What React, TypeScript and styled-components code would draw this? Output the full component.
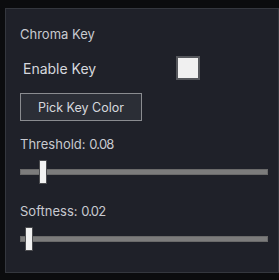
import React from "react";
import styled, { createGlobalStyle } from "styled-components";

const Global = createGlobalStyle`
  html, body { margin: 0; padding: 0; background: #0b0c0e; }
  body { font-family: Inter, "Noto Sans", sans-serif; }
`;

const Page = styled.div`
  width: 279px;
  height: 280px;
  padding: 8px 0 0 5px;
  box-sizing: border-box;
  background: #0b0c0e;
`;

const Panel = styled.div`
  width: 274px;
  height: 265px;
  box-sizing: border-box;
  background: #1f2129;
  border: 1px solid #34373e;
  padding: 17px 10px 0 14px;
  display: flex;
  flex-direction: column;
  align-items: flex-start;
`;

const Title = styled.div`
  font-size: 13px;
  line-height: 16px;
  color: #c8cad0;
`;

const Row = styled.div`
  display: flex;
  align-items: center;
  margin-top: 14px;
  height: 24px;
`;

const RowLabel = styled.span`
  font-size: 14px;
  line-height: 24px;
  padding-top: 2px;
  color: #d6d8dd;
  margin-left: 3px;
  width: 153px;
`;

const Check = styled.div<{ $on: boolean }>`
  width: 24px;
  height: 24px;
  box-sizing: border-box;
  border: 2px solid #55575c;
  background: ${(p) => (p.$on ? "#3b82f6" : "#f0f0f0")};
`;

const Button = styled.button`
  margin-top: 13px;
  width: 122px;
  height: 28px;
  box-sizing: border-box;
  background: #2b2e36;
  border: 1px solid #8a8c90;
  color: #d6d8dd;
  font-family: Inter, "Noto Sans", sans-serif;
  font-size: 12.5px;
  padding: 0;
`;

const Label = styled.div<{ $gap: number }>`
  margin-top: ${(p) => p.$gap}px;
  font-size: 13px;
  line-height: 16px;
  color: #c8cad0;
`;

const Value = styled.span`
  letter-spacing: -0.8px;
`;

const SliderBox = styled.div`
  position: relative;
  margin-top: 8px;
  width: 248px;
  height: 24px;
  display: flex;
  align-items: center;
`;

const Track = styled.div`
  width: 100%;
  height: 6px;
  box-sizing: border-box;
  background: #7c7c7c;
  border: 1px solid #6a6a6a;
`;

const Thumb = styled.div`
  position: absolute;
  top: 0;
  width: 8px;
  height: 24px;
  box-sizing: border-box;
  background: #f2f2f2;
  border: 1px solid #4c4d50;
  border-radius: 1px;
`;

function Slider({ value }: { value: number }) {
  return (
    <SliderBox>
      <Track />
      <Thumb style={{ left: `${value * 240}px` }} />
    </SliderBox>
  );
}

export default function App() {
  return (
    <Page>
      <Global />
      <Panel>
        <Title>Chroma Key</Title>
        <Row>
          <RowLabel>Enable Key</RowLabel>
          <Check $on={false} />
        </Row>
        <Button>Pick Key Color</Button>
        <Label $gap={15}>
          Threshold: <Value>0.08</Value>
        </Label>
        <Slider value={0.08} />
        <Label $gap={19}>
          Softness: <Value>0.02</Value>
        </Label>
        <Slider value={0.02} />
      </Panel>
    </Page>
  );
}
